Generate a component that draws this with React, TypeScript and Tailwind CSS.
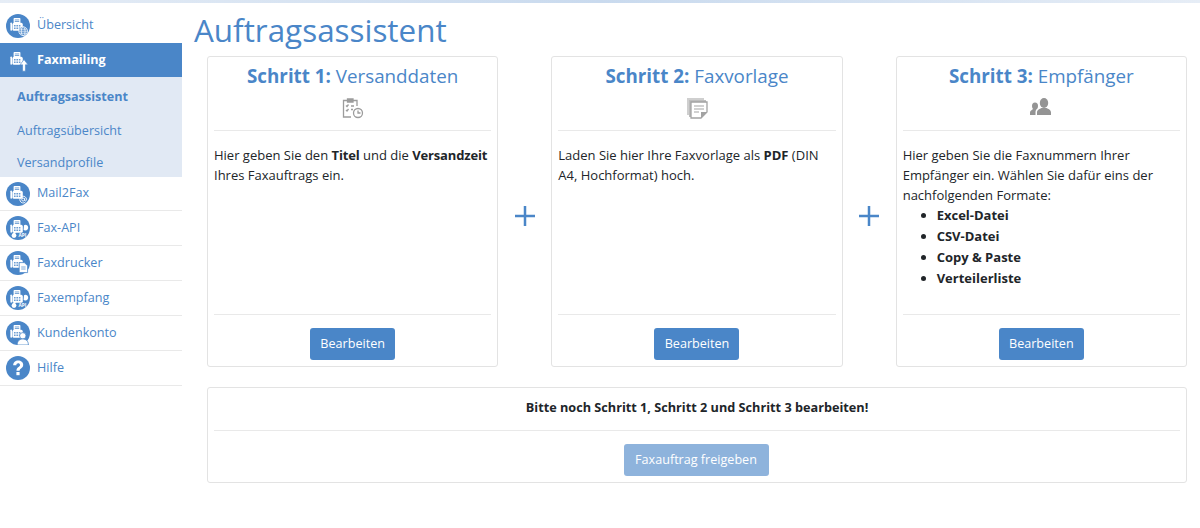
const FONT = "font-['Open_Sans','Noto_Sans',sans-serif]";

function FaxGlyph() {
  return (
    <g fill="#fff">
      <rect x="9.500" y="5" width="8.500" height="8" rx="1" />
      <rect x="8" y="11" width="13" height="10" rx="2" />
      <rect x="5.500" y="10.500" width="2" height="10.500" rx="1" />
      <g fill="#4a86c8">
        <rect x="11" y="7" width="5.500" height="0.900" />
        <rect x="11" y="9" width="5.500" height="0.900" />
        <rect x="10" y="14" width="2" height="1.500" />
        <rect x="13" y="14" width="2" height="1.500" />
        <rect x="16" y="14" width="2" height="1.500" />
        <rect x="10" y="17" width="2" height="1.500" />
        <rect x="13" y="17" width="2" height="1.500" />
        <rect x="16" y="17" width="2" height="1.500" />
      </g>
    </g>
  );
}

function NavIcon({ badge }: { badge: string }) {
  return (
    <svg width="24" height="24" viewBox="0 0 30 30" className="shrink-0">
      <circle cx="15" cy="15" r="15" fill="#4a86c8" />
      <FaxGlyph />
      {badge === "globe" && (
        <g fill="#4a86c8" stroke="#fff" strokeWidth="0.900">
          <circle cx="21.500" cy="21.500" r="5.500" />
          <ellipse cx="21.500" cy="21.500" rx="2.400" ry="5.500" fill="none" />
          <path d="M16 21.500h11M17 19h9M17 24h9" fill="none" />
        </g>
      )}
      {badge === "at" && (
        <g fill="none" stroke="#fff" strokeWidth="1.100">
          <circle cx="21.500" cy="22" r="1.800" />
          <path d="M23.300 20.200v2.600c0 1.200 2.400 1.200 2.400-.9a4.200 4.200 0 1 0-1.600 3.400" />
        </g>
      )}
      {badge === "api" && (
        <g fill="#fff">
          <path d="M22.500 11.500a3.500 3.500 0 1 1 1.500 6.500l-2-.5z" />
          <circle cx="10" cy="24.500" r="3" />
          <path d="M8 22.500l3-3 1.500 1.500-3 3z" />
          <text x="15.500" y="26" fontSize="6" fontWeight="700">
            API
          </text>
        </g>
      )}
      {badge === "doc" && (
        <g>
          <path d="M16.500 14.500h6.500l4 4v8.500H16.500z" fill="#fff" stroke="#4a86c8" strokeWidth="1" />
          <path d="M19 20h5.500M19 22.500h5.500" stroke="#4a86c8" strokeWidth="0.900" />
        </g>
      )}
      {badge === "user" && (
        <g fill="#fff" stroke="#4a86c8" strokeWidth="1">
          <circle cx="21" cy="18.500" r="4" />
          <path d="M14 30c0-5 3-7.500 7-7.500s7 2.500 7 7.500z" />
        </g>
      )}
    </svg>
  );
}

function UploadIcon() {
  return (
    <svg width="24" height="24" viewBox="0 0 30 30" className="shrink-0">
      <FaxGlyph />
      <path d="M22.500 14.500l5 6.500h-3.200v8h-3.600v-8H17.500z" fill="#fff" stroke="#4a86c8" strokeWidth="0.800" />
    </svg>
  );
}

function HelpIcon() {
  return (
    <svg width="24" height="24" viewBox="0 0 30 30" className="shrink-0">
      <circle cx="15" cy="15" r="15" fill="#4a86c8" />
      <path
        d="M9 11.500C9 7.800 11.800 5.500 15.200 5.500c3.600 0 6.300 2.100 6.300 5.300 0 4.600-4.500 4.300-4.500 7.700h-3.900c0-5 4.400-4.900 4.400-7.400 0-1.200-1-2-2.200-2-1.400 0-2.300.9-2.400 2.400z"
        fill="#fff"
      />
      <rect x="13" y="20" width="4" height="4" fill="#fff" />
    </svg>
  );
}

function NavRow({ label, badge, first }: { label: string; badge: string; first?: boolean }) {
  return (
    <div
      className={
        first
          ? "flex h-[34px] items-center gap-[7px] border-b border-[#e9e9e9] pl-[6px] text-[12.600px] text-[#4a86c8]"
          : "flex h-[35px] items-center gap-[7px] border-b border-[#e9e9e9] pl-[6px] text-[12.600px] text-[#4a86c8]"
      }
    >
      {badge === "help" ? <HelpIcon /> : <NavIcon badge={badge} />}
      <span>{label}</span>
    </div>
  );
}

function Sidebar() {
  return (
    <aside className="w-[182px] shrink-0 pt-[5px]">
      <div className="flex h-[35px] items-center gap-[7px] pl-[6px] text-[12.600px] text-[#4a86c8]">
        <NavIcon badge="globe" />
        <span>Übersicht</span>
      </div>
      <div className="flex h-[34px] items-center gap-[7px] bg-[#4a86c8] pl-[6px] text-[12.600px] font-bold text-white">
        <UploadIcon />
        <span>Faxmailing</span>
      </div>
      <div className="bg-[#e1e9f4] text-[12.600px] text-[#4a86c8]">
        <div className="flex h-[33px] items-center pl-[17px] pt-[7px] font-bold">Auftragsassistent</div>
        <div className="flex h-[34px] items-center pl-[17px] pt-[8px]">Auftragsübersicht</div>
        <div className="flex h-[33px] items-center pl-[17px] pt-[6px]">Versandprofile</div>
      </div>
      <NavRow label="Mail2Fax" badge="at" first />
      <NavRow label="Fax-API" badge="api" />
      <NavRow label="Faxdrucker" badge="doc" />
      <NavRow label="Faxempfang" badge="api" />
      <NavRow label="Kundenkonto" badge="user" />
      <NavRow label="Hilfe" badge="help" />
    </aside>
  );
}

function ClipboardIcon() {
  return (
    <svg width="22" height="22" viewBox="0 0 22 22" fill="none" stroke="#9c9c9c" strokeWidth="1.300">
      <path d="M15 9V3.500H1.500V20H9" />
      <path d="M5.500 2h5.500v3H5.500z" fill="#9c9c9c" />
      <path d="M4 8.500l1 1 1.500-2M4 13l1 1 1.500-2M9 9h3M9 12.500h2" />
      <circle cx="16" cy="16" r="4.500" />
      <path d="M16 13.500V16h2.500" />
    </svg>
  );
}

function NoteIcon() {
  return (
    <svg width="22" height="22" viewBox="0 0 22 22">
      <path d="M1 1h17v2H3v15H1z" fill="#cfcfcf" />
      <path d="M3 3h17v2H5v15H3z" fill="#bdbdbd" />
      <path d="M5 5h16v10l-6 6H5z" fill="#fff" stroke="#a3a3a3" strokeWidth="1.300" />
      <path d="M8 9h10M8 12h10M8 15h5" stroke="#a3a3a3" strokeWidth="1.200" />
      <path d="M15 21v-6h6z" fill="#a3a3a3" />
    </svg>
  );
}

function PeopleIcon() {
  return (
    <svg width="22" height="22" viewBox="0 0 22 22" fill="#949494">
      <ellipse cx="14" cy="6" rx="4.200" ry="5" />
      <path d="M7 18v-2.500c0-3 3-3.500 4.500-4.500h5c1.500 1 4.500 1.500 4.500 4.500V18z" />
      <ellipse cx="5" cy="9" rx="3" ry="3.500" />
      <path d="M0 18v-2.500c0-2 2-2.500 3-3.500h3c.3 0 .5.200.5.300C6 13 5.500 14 5.500 15.500V18z" />
    </svg>
  );
}

function BlueButton({ label, disabled }: { label: string; disabled?: boolean }) {
  return (
    <button
      className={
        disabled
          ? "mr-[2px] h-[32px] w-[145px] rounded-[3px] bg-[#8eb3dc] pt-[1px] text-[12.600px] text-white"
          : "h-[32px] w-[85px] rounded-[3px] bg-[#4a86c8] pt-[1px] text-[12.600px] text-white"
      }
    >
      {label}
    </button>
  );
}

function StepCard({
  step,
  title,
  icon,
  children,
}: {
  step: string;
  title: string;
  icon: React.ReactNode;
  children: React.ReactNode;
}) {
  return (
    <div className="flex h-[311px] min-w-0 flex-1 flex-col rounded-[3px] border border-[#e3e3e3] px-[6px]">
      <h2 className="mt-[5px] h-[30px] text-center text-[18.800px] leading-[29px] text-[#4a86c8]">
        <b>{step}:</b> {title}
      </h2>
      <div className="flex h-[38px] justify-center pt-[5px]">{icon}</div>
      <div className="flex-1 border-y border-[#e9e9e9] pt-[14px] text-[13px] leading-[20px] text-[#212529]">
        {children}
      </div>
      <div className="flex h-[51px] justify-center pt-[13px]">
        <BlueButton label="Bearbeiten" />
      </div>
    </div>
  );
}

function Plus() {
  return (
    <div className="flex w-[53px] shrink-0 items-center justify-center pt-[9px]">
      <svg width="20" height="20" viewBox="0 0 20 20">
        <path d="M10 0v20M0 10h20" stroke="#4a86c8" strokeWidth="2.500" />
      </svg>
    </div>
  );
}

export default function App() {
  return (
    <div className={`${FONT} h-[528px] w-[1200px] overflow-hidden bg-white`}>
      <div className="h-[3px] bg-gradient-to-r from-[#e6edf6] via-[#c9daee] to-[#e6edf6]" />
      <div className="flex">
        <Sidebar />
        <main className="flex-1 pl-[12px] pr-[13px]">
          <h1 className="h-[53px] text-[31.400px] leading-[53px] text-[#4a86c8]">Auftragsassistent</h1>
          <div className="ml-[13px] flex">
            <StepCard step="Schritt 1" title="Versanddaten" icon={<ClipboardIcon />}>
              <p>
                Hier geben Sie den <b className="tracking-[-0.15px]">Titel</b> und die{" "}
                <b className="tracking-[-0.15px]">Versandzeit</b> Ihres Faxauftrags ein.
              </p>
            </StepCard>
            <Plus />
            <StepCard step="Schritt 2" title="Faxvorlage" icon={<NoteIcon />}>
              <p>
                Laden Sie hier Ihre Faxvorlage als <b>PDF</b> (DIN A4, Hochformat) hoch.
              </p>
            </StepCard>
            <Plus />
            <StepCard step="Schritt 3" title="Empfänger" icon={<PeopleIcon />}>
              <p>
                Hier geben Sie die Faxnummern Ihrer Empfänger ein. Wählen Sie dafür eins der nachfolgenden
                Formate:
              </p>
              <ul className="list-disc pl-[34px] font-bold leading-[21px]">
                <li>Excel-Datei</li>
                <li>CSV-Datei</li>
                <li>Copy &amp; Paste</li>
                <li>Verteilerliste</li>
              </ul>
            </StepCard>
          </div>
          <div className="ml-[13px] mt-[20px] h-[96px] rounded-[3px] border border-[#e3e3e3] px-[6px]">
            <div className="flex h-[43px] items-center justify-center border-b border-[#e9e9e9] pb-[3px] text-[12.700px] font-bold text-[#212529]">
              Bitte noch Schritt 1, Schritt 2 und Schritt 3 bearbeiten!
            </div>
            <div className="flex justify-center pt-[13px]">
              <BlueButton label="Faxauftrag freigeben" disabled />
            </div>
          </div>
        </main>
      </div>
    </div>
  );
}
